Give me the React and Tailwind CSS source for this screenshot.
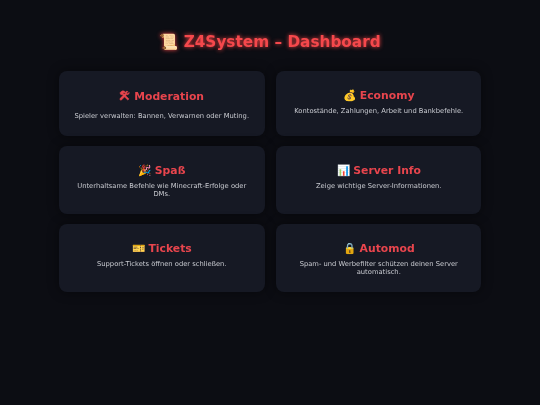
const WrenchHammer = () => (
  <svg viewBox="0 0 12 12" className="inline-block w-[11px] h-[11px] align-[-1px] fill-current stroke-current stroke-[0.7]">
    <path d="M1 3.2 3.2 1h2.3L7 2.4 6 3.4 5 2.9 4.4 3.6l6.4 6.1-1.2 1.3L3.2 4.7 2.4 5.4Z" />
    <path d="M11 2.6 9.4 4.2 8.2 3.3 9.6 1.6C8 .9 6.7 2 7 3.6L1.3 9.1a1.1 1.1 0 0 0 1.6 1.6L8.4 5c1.6.4 3-1 2.6-2.4Z" />
  </svg>
)

const cards = [
  { icon: <WrenchHammer />, title: 'Moderation', text: 'Spieler verwalten: Bannen, Verwarnen oder Muting.', head: 'leading-[18px]', gap: 'mt-[6px]' },
  { icon: '💰', title: 'Economy', text: 'Kontostände, Zahlungen, Arbeit und Bankbefehle.', head: 'leading-[16px]', gap: 'mt-[3px]' },
  { icon: '🎉', title: 'Spaß', text: 'Unterhaltsame Befehle wie Minecraft-Erfolge oder DMs.', head: 'leading-[16px]', gap: 'mt-[3px]' },
  { icon: '📊', title: 'Server Info', text: 'Zeige wichtige Server-Informationen.', head: 'leading-[16px]', gap: 'mt-[3px]' },
  { icon: '🎫', title: 'Tickets', text: 'Support-Tickets öffnen oder schließen.', head: 'leading-[16px]', gap: 'mt-[3px]' },
  { icon: '🔒', title: 'Automod', text: 'Spam- und Werbefilter schützen deinen Server automatisch.', head: 'leading-[16px]', gap: 'mt-[3px]' },
]

const Card = ({ icon, title, text, head, gap }) => (
  <div className="bg-[#161924] rounded-[8px] px-[11px] pt-[17px] pb-[16px] text-center shadow-[0_0_12px_rgba(0,0,0,0.45)]">
    <h2 className={`${head} will-change-transform text-[#e8454d] text-[10.8px] font-bold`}>
      {icon} {title}
    </h2>
    <p className={`${gap} will-change-transform text-[#c8cad0] text-[6.75px] leading-[8px]`}>{text}</p>
  </div>
)

export default function App() {
  return (
    <div className="min-h-[405px] bg-[#0c0d13] font-['DejaVu_Sans',sans-serif] px-[59px] pt-[32px]">
      <h1 className="will-change-transform text-[#f5484c] text-[15.3px] leading-[20px] font-bold text-center [text-shadow:0_0_4px_#ef4444]">
        📜 Z4System – Dashboard
      </h1>
      <div className="mt-[19px] grid grid-cols-2 gap-x-[11px] gap-y-[10px]">
        {cards.map(card => (
          <Card key={card.title} {...card} />
        ))}
      </div>
    </div>
  )
}
